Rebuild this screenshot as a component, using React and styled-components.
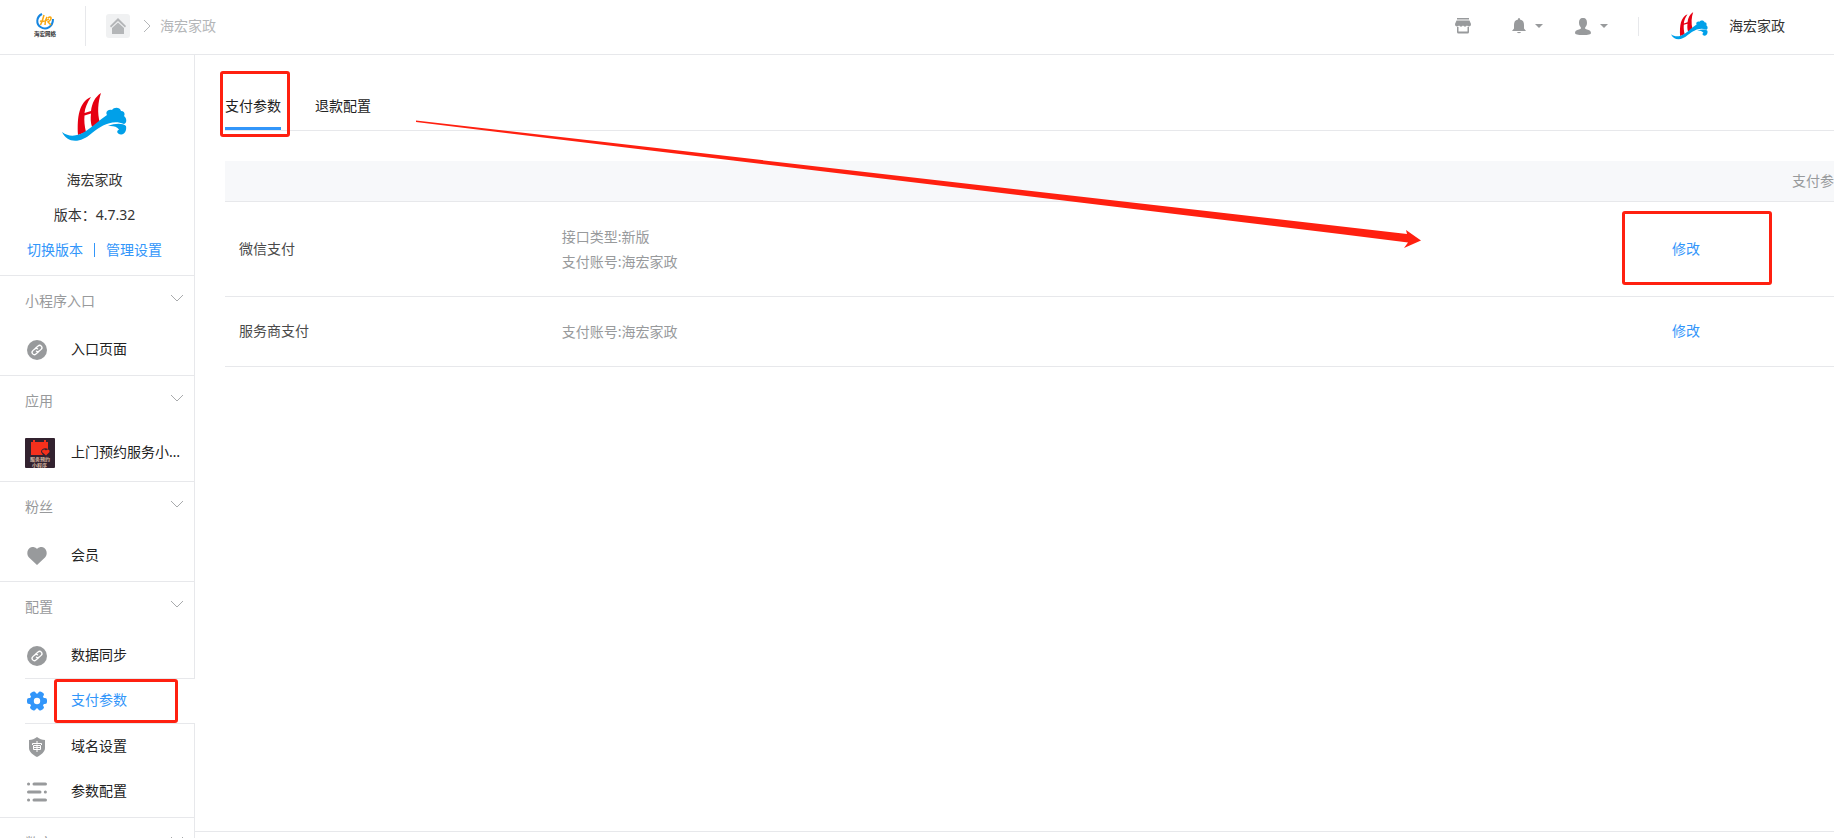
import React from "react";
import styled, { createGlobalStyle, css } from "styled-components";

const RED = "#ff2010";
const BLUE = "#3296fa";
const LINE = "#e7e8eb";
const GREY = "#989a9c";

const GlobalStyle = createGlobalStyle`
  * { box-sizing: border-box; }
  body {
    margin: 0;
    background: #fff;
    color: #333;
    font: 14px/20px "Noto Sans", "Noto Sans CJK SC", sans-serif;
  }
  a { color: inherit; text-decoration: none; }
  button { font: inherit; color: inherit; background: none; border: 0; padding: 0; cursor: pointer; }
  svg { display: block; flex: none; }
  p { margin: 0; }
`;

const Page = styled.div`
  display: flex;
  flex-direction: column;
  height: 100vh;
  overflow: hidden;
`;

const TopBar = styled.header`
  display: flex;
  flex: none;
  align-items: center;
  height: 55px;
  padding: 0 49px 2px 32px;
  border-bottom: 1px solid ${LINE};
`;

const Brand = styled.a`
  width: 26px;
  margin-right: 27px;
`;

const Rule = styled.span`
  width: 1px;
  height: ${(p) => p.$height}px;
  background: ${LINE};
`;

const HomeButton = styled.button`
  display: flex;
  align-items: center;
  justify-content: center;
  width: 24px;
  height: 24px;
  margin: 0 13px 0 20px;
  border-radius: 3px;
  background: #f0f1f2;
`;

const Crumb = styled.a`
  margin-left: 9px;
  color: #b4b6b8;
`;

const TopTools = styled.nav`
  display: flex;
  align-items: center;
  margin-left: auto;
  color: ${GREY};
`;

const ToolButton = styled.button`
  display: flex;
  align-items: center;
  gap: 9px;
  margin-right: ${(p) => p.$after}px;
`;

const Account = styled.a`
  display: flex;
  align-items: center;
  gap: 21px;
  margin-left: 32px;
  color: #333;
`;

const Body = styled.div`
  display: flex;
  flex: 1;
  min-height: 0;
`;

const Sidebar = styled.aside`
  flex: none;
  width: 195px;
  overflow: hidden;
`;

const SideBody = styled.div`
  border-right: 1px solid ${LINE};
`;

const Profile = styled.div`
  display: flex;
  flex-direction: column;
  align-items: center;
  gap: 15px;
  height: 221px;
  padding: 38px 5px 0 0;
  border-bottom: 1px solid ${LINE};
`;

const ProfileLogo = styled.div`
  height: 62px;
`;

const ProfileLinks = styled.div`
  display: flex;
  align-items: center;
  gap: 11px;
  color: ${BLUE};
`;

const LinkRule = styled.span`
  width: 1px;
  height: 14px;
  background: ${BLUE};
`;

const Section = styled.section`
  padding: 0 0 3px 25px;
  border-bottom: 1px solid ${LINE};
`;

const SectionTitle = styled.button`
  display: flex;
  align-items: center;
  justify-content: space-between;
  width: 100%;
  height: 51px;
  padding: 0 11px 2px 0;
  color: ${GREY};
`;

const MenuLink = styled.a`
  position: relative;
  display: flex;
  align-items: center;
  height: ${(p) => (p.$tall ? 51 : 45)}px;
  color: #222;
  ${(p) =>
    p.$active &&
    css`
      height: 46px;
      margin-right: -1px;
      background: #fff;
      border: solid ${LINE};
      border-width: 1px 0;
      color: ${BLUE};
    `}
`;

const MenuIcon = styled.span`
  display: flex;
  flex: none;
  width: 46px;
  padding-left: ${(p) => (p.$flush ? 0 : 2)}px;
  color: ${(p) => (p.$active ? BLUE : GREY)};
`;

const MenuText = styled.span`
  width: 112px;
  padding-bottom: 2px;
  overflow: hidden;
  text-overflow: ellipsis;
  white-space: nowrap;
`;

const Main = styled.main`
  position: relative;
  display: flex;
  flex: 1;
  flex-direction: column;
  min-width: 0;
`;

const Content = styled.div`
  flex: 1;
  padding-left: 30px;
`;

const Tabs = styled.nav`
  display: flex;
  gap: 34px;
  height: 76px;
  border-bottom: 1px solid ${LINE};
  margin-bottom: 30px;
`;

const Tab = styled.a`
  position: relative;
  height: 75px;
  padding-top: 41px;
  color: #222;
  border-bottom: 3px solid ${(p) => (p.$active ? BLUE : "transparent")};
`;

const PayTable = styled.table`
  width: 100%;
  table-layout: fixed;
  border-collapse: separate;
  border-spacing: 0;
`;

const NameCol = styled.col`
  width: 20%;
`;
const ActionCol = styled.col`
  width: 120px;
`;
const EndCol = styled.col`
  width: 56px;
`;

const HeadCell = styled.th`
  height: 41px;
  padding: 0 0 0 14px;
  overflow: hidden;
  white-space: nowrap;
  text-align: left;
  font-weight: 400;
  color: ${GREY};
  background: #f7f8fa;
  border-bottom: 1px solid ${LINE};
`;

const Cell = styled.td`
  height: ${(p) => p.$height}px;
  padding: 0 0 2px 14px;
  line-height: 25px;
  color: #4a4a4a;
  border-bottom: 1px solid ${LINE};
`;

const InfoCell = styled(Cell)`
  padding: 0 0 0 15px;
  color: ${GREY};
`;

const EditLink = styled.a`
  position: relative;
  color: ${BLUE};
`;

const Mark = styled.span`
  position: absolute;
  top: ${(p) => p.$top}px;
  left: ${(p) => p.$left}px;
  width: ${(p) => p.$width}px;
  height: ${(p) => p.$height}px;
  border: 3px solid ${RED};
  border-radius: 3px;
  pointer-events: none;
`;

const ArrowLayer = styled.div`
  position: absolute;
  top: 63px;
  left: 221px;
  right: 413px;
  height: 132px;
  pointer-events: none;
`;

const Footer = styled.footer`
  height: 7px;
  border-top: 1px solid ${LINE};
`;

const ShipLogo = ({ width, height }) => (
  <svg width={width} height={height} viewBox="0 0 65 49" aria-hidden="true">
    <path fill="#e60012" d="M16 42C15 24 17 9 29 4C25 10 23 15 22.500 20L29 18C30 10 33 4 39 0C36 9 35 20 38 30L30 34C28.500 30 28.500 25 29 20.500L22.500 22.500C22 28 22.500 33 24 39Z" />
    <path fill="#00a0e9" d="M0 39C8 45 16 43 24 38C32 33 37 27 45 22C43 19 46 16 50 17C52 14 58 14 59 18C63 18 63 22 62 23C65 25 65 30 62 31C50 26 39 33 30 40C18 51 5 50 0 39Z" />
    <path fill="#00a0e9" d="M46 33C53 30 61 30 64 33C65 38 62 42 59 41.500C55 41 54 38 57 36.500C55 33.500 51 32.500 46 33Z" />
  </svg>
);

const BrandLogo = () => (
  <svg width="26" height="28" viewBox="0 0 26 28" role="img" aria-label="海宏网络">
    <path fill="none" stroke="#1686e0" strokeWidth="2" d="M10 2C4 5 4 12 8.500 15C14 18.500 21 15 21 7" />
    <path fill="none" stroke="#f7a813" strokeWidth="1.500" d="M12 3C11 7 10 10 8.500 13M8 9C11 10 14 9 17 7M15 5C13 8 13 11 13 13M16 6C19 3 21 7 16 10L19 13" />
    <text x="2" y="24" fontSize="5.500" fontWeight="700" fill="#333">海宏网络</text>
  </svg>
);

const HomeIcon = () => (
  <svg width="18" height="18" viewBox="0 0 18 18" fill="#b4b6b8" aria-hidden="true">
    <path d="M9 1L17 9L16 10.500L9 4L2 10.500L1 9Z" />
    <path d="M9 5.500L15 11V17H3V11Z" />
  </svg>
);

const CrumbArrow = () => (
  <svg width="8" height="14" viewBox="0 0 8 14" fill="none" stroke="#b4b6b8" aria-hidden="true">
    <path d="M1 1L7 7L1 13" />
  </svg>
);

const ShopIcon = () => (
  <svg width="16" height="16" viewBox="0 0 16 16" fill="currentColor" aria-hidden="true">
    <path d="M2 0H14V1.500H2ZM1.500 2.500H14.500L16 6C16 9 13 9 12 7.500C11 9 9 9 8 7.500C7 9 5 9 4 7.500C3 9 0 9 0 6Z" />
    <path d="M2 9H3.500V13.500H12.500V9H14V14Q14 15.500 12.500 15.500H3.500Q2 15.500 2 14Z" />
  </svg>
);

const BellIcon = () => (
  <svg width="14" height="16" viewBox="0 0 14 16" fill="currentColor" aria-hidden="true">
    <path d="M7 0C8 0 8 1 8 1.500C11 2 12 4 12 7V10.500L14 13H0L2 10.500V7C2 4 3 2 6 1.500C6 1 6 0 7 0ZM5 14H9C9 15.500 5 15.500 5 14Z" />
  </svg>
);

const UserIcon = () => (
  <svg width="16" height="17" viewBox="0 0 16 17" fill="currentColor" aria-hidden="true">
    <path d="M8 0C11 0 12 2 12 5C12 8 10 9 10 10C10 12 16 11 16 15Q16 17 8 17Q0 17 0 15C0 11 6 12 6 10C6 9 4 8 4 5C4 2 5 0 8 0Z" />
  </svg>
);

const Caret = () => (
  <svg width="8" height="4" viewBox="0 0 8 4" fill="currentColor" aria-hidden="true">
    <path d="M0 0H8L4 4Z" />
  </svg>
);

const Chevron = () => (
  <svg width="12" height="14" viewBox="0 0 12 14" fill="none" stroke="#a8aaac" aria-hidden="true">
    <path d="M0 1L6 7L12 1" />
  </svg>
);

const LinkIcon = () => (
  <svg width="20" height="20" viewBox="0 0 20 20" aria-hidden="true">
    <circle cx="10" cy="10" r="10" fill="currentColor" />
    <g fill="none" stroke="#fff" strokeWidth="1.300" strokeLinecap="round" transform="rotate(-42 10 10)">
      <path d="M10 7.700H13.500A2.300 2.300 0 0 1 13.500 12.300H11A2.300 2.300 0 0 1 8.800 10.500" />
      <path d="M10 12.300H6.500A2.300 2.300 0 0 1 6.500 7.700H9A2.300 2.300 0 0 1 11.200 9.500" />
    </g>
  </svg>
);

const HeartIcon = () => (
  <svg width="20" height="18" viewBox="0 0 20 18" fill="currentColor" aria-hidden="true">
    <path d="M10 18L2 10.500C-1 7 0 1 5 0C7 0 9 0.500 10 2C11 0.500 13 0 15 0C20 1 21 7 18 10.500Z" />
  </svg>
);

const GearIcon = () => (
  <svg width="20" height="20" viewBox="0 0 20 20" aria-hidden="true">
    <g fill="currentColor">
      <circle cx="10" cy="10" r="7.500" />
      {[0, 60, 120, 180, 240, 300].map((a) => (
        <rect key={a} x="13" y="7" width="7" height="6" rx="2" transform={`rotate(${a} 10 10)`} />
      ))}
    </g>
    <circle cx="10" cy="10" r="3.200" fill="#fff" />
  </svg>
);

const ShieldIcon = () => (
  <svg width="20" height="20" viewBox="0 0 20 20" aria-hidden="true">
    <path fill="currentColor" d="M10 0C12.500 2 15 3 18 3V11C18 15 14 18 10 20C6 18 2 15 2 11V3C5 3 7.500 2 10 0Z" />
    <path fill="none" stroke="#fff" d="M10 4V6M5.500 8V6.500H14.500V8M6.500 8.500H13.500V12.500H6.500ZM6.500 10.500H13.500M10 7.500V15" />
  </svg>
);

const SlidersIcon = () => (
  <svg width="20" height="20" viewBox="0 0 20 20" stroke="currentColor" strokeWidth="3" strokeLinecap="round" aria-hidden="true">
    <path d="M7 2H18.500M1.500 10H13M7 18H18.500M1.500 2H1.600M18.300 10H18.400M1.500 18H1.600" />
  </svg>
);

const AppThumb = () => (
  <svg width="30" height="30" viewBox="0 0 30 30" aria-hidden="true">
    <rect width="30" height="30" rx="1" fill="#32222f" />
    <path fill="#f5301c" d="M6 4H8V2H10V4H19V2H21V4H23V11C20 9 16 11 16 14L18 17H6Z" />
    <path fill="#f5301c" d="M21 17.500L17 14C17 11 20 11 21 12.500C22 11 25 11 24.500 14Z" />
    <text x="5" y="23" fontSize="5" fontWeight="700" fill="#d9b9a3">服务预约</text>
    <text x="7" y="29" fontSize="5" fontWeight="700" fill="#d9b9a3">小程序</text>
  </svg>
);

const sections = [
  { title: "小程序入口", items: [{ text: "入口页面", Icon: LinkIcon }] },
  { title: "应用", items: [{ text: "上门预约服务小程序", Icon: AppThumb, tall: true }] },
  { title: "粉丝", items: [{ text: "会员", Icon: HeartIcon }] },
  {
    title: "配置",
    items: [
      { text: "数据同步", Icon: LinkIcon },
      { text: "支付参数", Icon: GearIcon, active: true },
      { text: "域名设置", Icon: ShieldIcon },
      { text: "参数配置", Icon: SlidersIcon },
    ],
  },
  { title: "数字", items: [] },
];

const rows = [
  { name: "微信支付", info: ["接口类型:新版", "支付账号:海宏家政"], height: 95, marked: true },
  { name: "服务商支付", info: ["支付账号:海宏家政"], height: 70 },
];

export default function App() {
  return (
    <Page>
      <GlobalStyle />
      <TopBar>
        <Brand href="#"><BrandLogo /></Brand>
        <Rule $height={40} />
        <HomeButton aria-label="首页"><HomeIcon /></HomeButton>
        <CrumbArrow />
        <Crumb href="#">海宏家政</Crumb>
        <TopTools>
          <ToolButton $after={41} aria-label="商城"><ShopIcon /></ToolButton>
          <ToolButton $after={32} aria-label="消息"><BellIcon /><Caret /></ToolButton>
          <ToolButton $after={30} aria-label="用户"><UserIcon /><Caret /></ToolButton>
          <Rule $height={19} />
          <Account href="#"><ShipLogo width={37} height={28} />海宏家政</Account>
        </TopTools>
      </TopBar>
      <Body>
        <Sidebar>
          <SideBody>
            <Profile>
              <ProfileLogo><ShipLogo width={65} height={49} /></ProfileLogo>
              <p>海宏家政</p>
              <p>版本：4.7.32</p>
              <ProfileLinks>
                <a href="#">切换版本</a>
                <LinkRule />
                <a href="#">管理设置</a>
              </ProfileLinks>
            </Profile>
            {sections.map(({ title, items }) => (
              <Section key={title}>
                <SectionTitle>{title}<Chevron /></SectionTitle>
                {items.map(({ text, Icon, tall, active }) => (
                  <MenuLink key={text} href="#" $tall={tall} $active={active}>
                    <MenuIcon $flush={tall} $active={active}><Icon /></MenuIcon>
                    <MenuText>{text}</MenuText>
                    {active && <Mark $top={0} $left={29} $width={124} $height={44} />}
                  </MenuLink>
                ))}
              </Section>
            ))}
          </SideBody>
        </Sidebar>
        <Main>
          <Content>
            <Tabs>
              <Tab href="#" $active>支付参数<Mark $top={16} $left={-5} $width={70} $height={66} /></Tab>
              <Tab href="#">退款配置</Tab>
            </Tabs>
            <PayTable>
              <colgroup><NameCol /><col /><ActionCol /><EndCol /></colgroup>
              <thead>
                <tr><HeadCell colSpan={3} /><HeadCell>支付参数</HeadCell></tr>
              </thead>
              <tbody>
                {rows.map(({ name, info, height, marked }) => (
                  <tr key={name}>
                    <Cell $height={height}>{name}</Cell>
                    <InfoCell $height={height}>{info.map((line) => <p key={line}>{line}</p>)}</InfoCell>
                    <Cell $height={height} colSpan={2}>
                      <EditLink href="#">修改{marked && <Mark $top={-28} $left={-50} $width={150} $height={74} />}</EditLink>
                    </Cell>
                  </tr>
                ))}
              </tbody>
            </PayTable>
          </Content>
          <Footer />
          <ArrowLayer>
            <svg width="100%" height="132" viewBox="0 0 1005 132" preserveAspectRatio="none" aria-hidden="true">
              <path fill={RED} d="M0 2.500L991 116L990 112L1005 122.500L988 130L992 124.500L924 116L0 4Z" />
            </svg>
          </ArrowLayer>
        </Main>
      </Body>
    </Page>
  );
}
